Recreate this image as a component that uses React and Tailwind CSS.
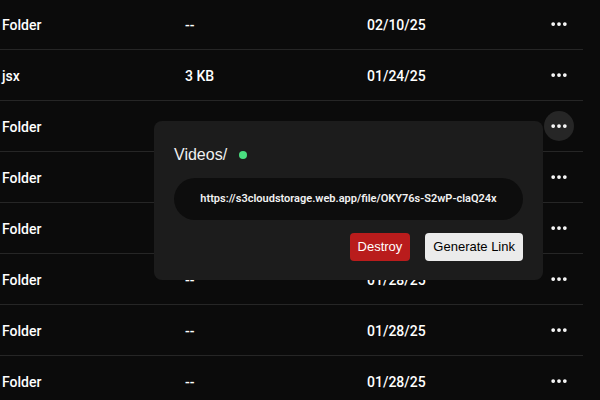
import { Ellipsis } from 'lucide-react'

const rows = [
  { name: 'Folder', size: '--', date: '02/10/25' },
  { name: 'jsx', size: '3 KB', date: '01/24/25' },
  { name: 'Folder', size: '--', date: '01/28/25', active: true },
  { name: 'Folder', size: '--', date: '01/28/25' },
  { name: 'Folder', size: '--', date: '01/28/25' },
  { name: 'Folder', size: '--', date: '01/28/25' },
  { name: 'Folder', size: '--', date: '01/28/25' },
  { name: 'Folder', size: '--', date: '01/28/25' },
]

const App = () => {
  return (
    <div className="relative h-[400px] w-[600px] overflow-hidden bg-[#0b0b0b]">
      <div className="mt-[-1px] w-[583px] font-['Roboto',sans-serif] text-[14px] font-medium text-white">
        {rows.map((row, i) => (
          <div
            key={i}
            className="grid h-[51px] grid-cols-[183px_182px_1fr_auto] items-center border-b border-[#262626] pl-[2px] pr-[9px]"
          >
            <span className="pt-[2px]">{row.name}</span>
            <span className="pt-[2px]">{row.size}</span>
            <span className="pt-[2px]">{row.date}</span>
            <button
              className={`flex h-[30px] w-[30px] items-center justify-center rounded-full ${row.active ? 'bg-[#262626]' : ''}`}
            >
              <Ellipsis size={20} strokeWidth={2.5} />
            </button>
          </div>
        ))}
      </div>

      <div className="absolute left-[154px] top-[121px] w-[389px] rounded-lg bg-[#1c1c1c] px-5 pb-[19px] pt-[22px] font-['Liberation_Sans',Arial,sans-serif]">
        <div className="flex items-center gap-3">
          <h2 className="text-[16px] leading-6 text-[#f0f0f0]">Videos/</h2>
          <span className="h-2 w-2 rounded-full bg-[#4ade80]" />
        </div>
        <div className="mt-[11px] flex h-[42px] items-center justify-center rounded-full bg-[#0d0d0d] font-['Roboto',sans-serif] text-[11px] font-semibold text-[#f2f2f2]">
          https://s3cloudstorage.web.app/file/OKY76s-S2wP-claQ24x
        </div>
        <div className="mt-[13px] flex justify-end gap-[15px]">
          <button className="h-[28px] rounded bg-[#b91c1c] px-2 text-[13px] text-white">Destroy</button>
          <button className="h-[28px] rounded bg-[#ebebeb] px-2 text-[13px] text-black">Generate Link</button>
        </div>
      </div>
    </div>
  )
}

export default App
